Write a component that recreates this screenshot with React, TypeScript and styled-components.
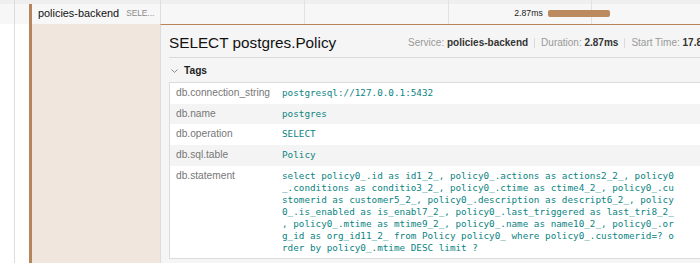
import React from 'react'
import styled, { createGlobalStyle } from 'styled-components'

const GlobalStyle = createGlobalStyle`
  html, body {
    margin: 0;
    padding: 0;
    overflow: hidden;
    background: #fff;
  }
  body {
    font-family: "Liberation Sans", Arial, sans-serif;
    color: #222;
  }
`

const BROWN = '#b8855b'

const Viewport = styled.div`
  width: 734px;
`

const Row = styled.div<{ $height: number; $bg: string }>`
  display: flex;
  height: ${(p) => p.$height}px;
  background: ${(p) => p.$bg};
`

const Indent = styled.div`
  flex: none;
  width: 29px;
  background: linear-gradient(#dcdcdc, #dcdcdc) 14px 0 / 1px 100% no-repeat;
`

const Spacer = styled.div`
  flex: none;
  width: 131px;
  border-right: 1px solid #dedede;
`

const NameCell = styled.div`
  flex: none;
  width: 132px;
  box-sizing: border-box;
  border-left: 3px solid ${BROWN};
  border-right: 1px solid #dedede;
  display: flex;
  align-items: center;
  gap: 7px;
  padding: 0 4px 2px 6px;
  white-space: nowrap;
  overflow: hidden;
`

const ServiceName = styled.span`
  flex: none;
  font-size: 10.9px;
  color: #111;
`

const Endpoint = styled.span`
  font-size: 8.3px;
  color: #8a8a8a;
`

const Timeline = styled.div`
  position: relative;
  flex: 1;
`

const Tick = styled.div`
  position: absolute;
  top: 0;
  bottom: 0;
  width: 1px;
  background: #e2e2e2;
`

const BarWrap = styled.div`
  position: absolute;
  top: 0;
  bottom: 0;
  display: flex;
  align-items: center;
  padding-bottom: 2px;
`

const Bar = styled.div`
  height: 7px;
  width: 100%;
  border-radius: 2px;
  background: #bb8a5f;
`

const BarLabel = styled.span`
  position: absolute;
  right: 100%;
  margin-right: 5px;
  font-size: 8.7px;
  color: #222;
  white-space: nowrap;
`

const Aside = styled.div`
  flex: none;
  width: 128px;
  border-left: 3px solid ${BROWN};
  background: #f0e6dd;
`

const Panel = styled.div`
  flex: 1;
  border-top: 1px solid ${BROWN};
  border-left: 1px solid #dcdcdc;
  background: #f5f5f5;
  padding: 0 12px 0 8px;
`

const Header = styled.div`
  display: flex;
  align-items: center;
  justify-content: space-between;
  height: 33px;
  padding-top: 3px;
  box-sizing: border-box;
  border-bottom: 1px solid #dadada;
  white-space: nowrap;
`

const Title = styled.h2`
  margin: 0;
  font-size: 15.3px;
  font-weight: 400;
  color: #111;
`

const Info = styled.div`
  display: flex;
  align-items: center;
  font-size: 10px;
  color: #999;
`

const InfoItem = styled.span`
  b {
    color: #333;
    font-weight: 700;
  }
`

const Divider = styled.span`
  width: 1px;
  height: 10px;
  margin: 0 6px;
  background: #dadada;
`

const SectionHead = styled.div`
  display: flex;
  align-items: center;
  gap: 6px;
  height: 24px;
  padding: 1px 0 0 2px;
  box-sizing: border-box;
  font-size: 10.2px;
  font-weight: 700;
  color: #222;
`

const Table = styled.div`
  border: 1px solid #dcdcdc;
  background: #fff;
`

const TagRow = styled.div<{ $odd: boolean }>`
  display: grid;
  grid-template-columns: 112px 1fr;
  background: ${(p) => (p.$odd ? '#f4f4f4' : '#fff')};
`

const Key = styled.div`
  padding: 4px 0 4px 6px;
  font-size: 10.2px;
  line-height: 12.7px;
  color: #777;
`

const Value = styled.div<{ $wrap?: boolean }>`
  padding: ${(p) => (p.$wrap ? '4px 0 4px' : '4px 0')};
  font-family: "DejaVu Sans Mono", "Liberation Mono", monospace;
  font-size: 9.3px;
  line-height: ${(p) => (p.$wrap ? '12px' : '12.7px')};
  color: #0b8482;
  word-break: break-all;
  line-break: anywhere;
  width: calc(70ch + 1px);
`

const statement =
  'select policy0_.id as id1_2_, policy0_.actions as actions2_2_, policy0_.conditions as conditio3_2_, policy0_.ctime as ctime4_2_, policy0_.customerid as customer5_2_, policy0_.description as descript6_2_, policy0_.is_enabled as is_enabl7_2_, policy0_.last_triggered as last_tri8_2_, policy0_.mtime as mtime9_2_, policy0_.name as name10_2_, policy0_.org_id as org_id11_2_ from Policy policy0_ where policy0_.customerid=? order by policy0_.mtime DESC limit ?'

const tags: [string, string][] = [
  ['db.connection_string', 'postgresql://127.0.0.1:5432'],
  ['db.name', 'postgres'],
  ['db.operation', 'SELECT'],
  ['db.sql.table', 'Policy'],
  ['db.statement', statement],
]

const ticks = [0.25, 0.5, 0.75]

const Ticks = () => (
  <>
    {ticks.map((t) => (
      <Tick key={t} style={{ left: `${t * 100}%` }} />
    ))}
  </>
)

const Chevron = () => (
  <svg width="7" height="4" viewBox="0 0 7 4">
    <polyline points="0.5,0.5 3.5,3.5 6.5,0.5" fill="none" stroke="#8a8a8a" strokeWidth="1" />
  </svg>
)

export default function App() {
  const span = { start: 0.675, width: 0.108, duration: '2.87ms' }

  return (
    <Viewport>
      <GlobalStyle />
      <Row $height={4} $bg="#efefef">
        <Indent />
        <Spacer />
        <Timeline>
          <Ticks />
        </Timeline>
      </Row>
      <Row $height={20} $bg="#f7f7f7">
        <Indent />
        <NameCell>
          <ServiceName>policies-backend</ServiceName>
          <Endpoint>SELE...</Endpoint>
        </NameCell>
        <Timeline>
          <Ticks />
          <BarWrap style={{ left: `${span.start * 100}%`, width: `${span.width * 100}%` }}>
            <BarLabel>{span.duration}</BarLabel>
            <Bar />
          </BarWrap>
        </Timeline>
      </Row>
      <Row $height={239} $bg="#fff">
        <Indent />
        <Aside />
        <Panel>
          <Header>
            <Title>SELECT postgres.Policy</Title>
            <Info>
              <InfoItem>
                Service: <b>policies-backend</b>
              </InfoItem>
              <Divider />
              <InfoItem>
                Duration: <b>2.87ms</b>
              </InfoItem>
              <Divider />
              <InfoItem>
                Start Time: <b>17.81ms</b>
              </InfoItem>
            </Info>
          </Header>
          <SectionHead>
            <Chevron />
            Tags
          </SectionHead>
          <Table>
            {tags.map(([k, v], i) => (
              <TagRow key={k} $odd={i % 2 === 1}>
                <Key>{k}</Key>
                <Value $wrap={k === 'db.statement'}>{v}</Value>
              </TagRow>
            ))}
          </Table>
        </Panel>
      </Row>
    </Viewport>
  )
}
